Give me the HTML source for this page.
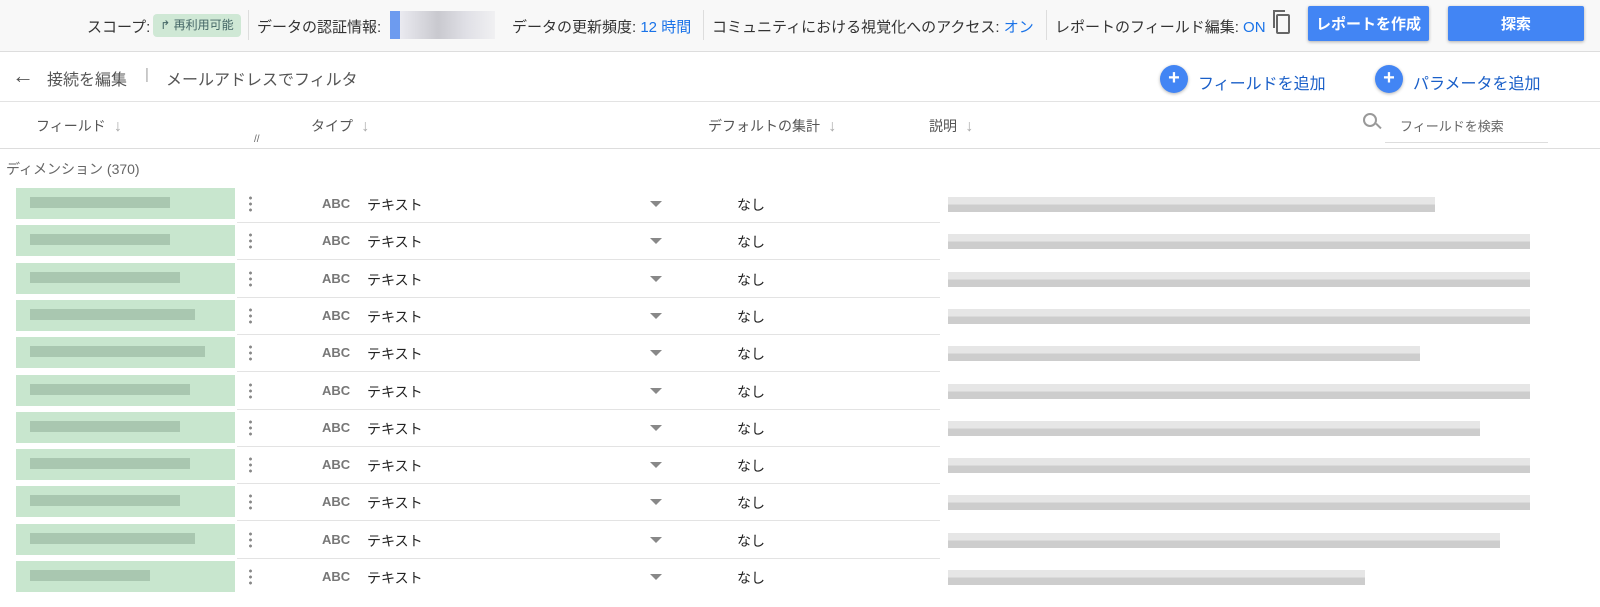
<!DOCTYPE html>
<html><head><meta charset="utf-8"><style>
*{margin:0;padding:0;box-sizing:border-box}
body{width:1600px;height:607px;overflow:hidden;background:#fff;font-family:"Liberation Sans","Noto Sans CJK JP",sans-serif;color:#333;position:relative}
.a{position:absolute;white-space:nowrap}
.top{position:absolute;left:0;top:0;width:1600px;height:52px;background:#f8f8f8;border-bottom:1px solid #ddd}
.sep{position:absolute;top:10px;width:1px;height:30px;background:#ddd}
.btn{position:absolute;top:6px;height:35px;background:#4285f4;color:#fff;font-size:15px;font-weight:bold;display:flex;align-items:center;justify-content:center;border-radius:2px;box-shadow:0 1px 3px rgba(0,0,0,.3)}
.blue{color:#1a73e8}
.plus{position:absolute;width:28px;height:28px;border-radius:50%;background:#4285f4;color:#fff;font-size:20px;font-weight:bold;text-align:center;line-height:27px;box-shadow:0 1px 3px rgba(0,0,0,.3)}
.hdr{font-size:14px;color:#555;top:116px}
.arr{color:#aaa;font-size:16px}
.row{position:absolute;left:0;width:1600px;height:37px}
.g{position:absolute;left:16px;top:2px;width:219px;height:31px;background:#c8e6ce}
.gi{position:absolute;left:30px;top:11px;height:11px;background:#a9c7b0}
.dots{position:absolute;left:249px;top:9px;width:3px;height:18px;background:radial-gradient(circle,#888 1.3px,transparent 1.6px) 0 0/3px 6px}
.abc{position:absolute;left:322px;top:10px;font-size:13px;color:#777;font-weight:bold;letter-spacing:0px}
.t{position:absolute;left:367px;top:9px;font-size:14px;color:#222}
.tri{position:absolute;left:650px;top:15px;border-left:6px solid transparent;border-right:6px solid transparent;border-top:6px solid #888}
.n{position:absolute;left:737px;top:9px;font-size:14px;color:#222}
.d{position:absolute;left:948px;top:11px;height:15px;background:linear-gradient(#e6e6e6 50%,#cdcdcd 50%)}
.line{position:absolute;left:237px;bottom:0;width:703px;height:1px;background:#e3e3e3}
</style></head><body>
<div class="top">
<div class="a" style="left:87px;top:16px;font-size:15px">スコープ:</div>
<div class="a" style="left:153px;top:14px;width:88px;height:23px;background:#cfe8d5;border-radius:4px;font-size:12px;color:#466;line-height:23px;text-align:center">↱ 再利用可能</div>
<div class="sep" style="left:248px"></div>
<div class="a" style="left:257px;top:16px;font-size:15px">データの認証情報:</div>
<div class="a" style="left:390px;top:11px;width:10px;height:28px;background:#6d9bef"></div>
<div class="a" style="left:400px;top:11px;width:95px;height:28px;background:linear-gradient(90deg,#eaeaf0,#c9c9cf 40%,#e0e0e6 70%,#f0f0f2)"></div>
<div class="a" style="left:512px;top:16px;font-size:15px">データの更新頻度: <span class="blue">12 時間</span></div>
<div class="sep" style="left:703px"></div>
<div class="a" style="left:712px;top:16px;font-size:15px">コミュニティにおける視覚化へのアクセス: <span class="blue">オン</span></div>
<div class="sep" style="left:1046px"></div>
<div class="a" style="left:1055px;top:16px;font-size:15px">レポートのフィールド編集: <span class="blue">ON</span></div>
<div class="a" style="left:1276px;top:14px;width:14px;height:20px;border:2px solid #666;border-radius:2px;background:#f8f8f8"></div>
<div class="a" style="left:1273px;top:10px;width:12px;height:18px;border-left:2px solid #666;border-top:2px solid #666"></div>
<div class="btn" style="left:1308px;width:121px">レポートを作成</div>
<div class="btn" style="left:1448px;width:136px">探索</div>
</div>
<div class="a" style="left:12px;top:63px;font-size:22px;color:#555">←</div>
<div class="a" style="left:47px;top:66px;font-size:16px;color:#555">接続を編集</div>
<div class="a" style="left:145px;top:66px;font-size:15px;color:#aaa">|</div>
<div class="a" style="left:166px;top:66px;font-size:16px;color:#555">メールアドレスでフィルタ</div>
<div class="plus" style="left:1160px;top:65px">+</div>
<div class="a blue" style="left:1198px;top:70px;font-size:16px;color:#1a5fc8">フィールドを追加</div>
<div class="plus" style="left:1375px;top:65px">+</div>
<div class="a" style="left:1413px;top:70px;font-size:16px;color:#1a5fc8">パラメータを追加</div>
<div class="a" style="left:0;top:101px;width:1600px;height:1px;background:#e3e3e3"></div>
<div class="a hdr" style="left:36px">フィールド <span class="arr">&nbsp;↓</span></div>
<div class="a" style="left:254px;top:134px;font-size:10px;color:#666">//</div>
<div class="a hdr" style="left:311px">タイプ <span class="arr">&nbsp;↓</span></div>
<div class="a hdr" style="left:708px">デフォルトの集計 <span class="arr">&nbsp;↓</span></div>
<div class="a hdr" style="left:929px">説明 <span class="arr">&nbsp;↓</span></div>
<div class="a" style="left:1363px;top:113px;width:14px;height:14px;border:2px solid #999;border-radius:50%"></div>
<div class="a" style="left:1375px;top:125px;width:7px;height:2px;background:#999;transform:rotate(45deg)"></div>
<div class="a" style="left:1400px;top:116px;font-size:13px;color:#666">フィールドを検索</div>
<div class="a" style="left:1385px;top:142px;width:163px;height:1px;background:#ddd"></div>
<div class="a" style="left:0;top:148px;width:1600px;height:1px;background:#ddd"></div>
<div class="a" style="left:6px;top:159px;font-size:14px;color:#666">ディメンション (370)</div>
<div id="rows"></div>
<script>
var ends=[1435,1530,1530,1530,1420,1530,1480,1530,1530,1500,1365];
var gw=[140,140,150,165,175,160,150,160,150,165,120];
var h='';
for(var i=0;i<11;i++){var y=186+i*37.3;
h+='<div class="row" style="top:'+y+'px"><div class="g"></div><div class="gi" style="width:'+gw[i]+'px"></div><div class="dots"></div><div class="abc">ABC</div><div class="t">テキスト</div><div class="tri"></div><div class="n">なし</div><div class="d" style="width:'+(ends[i]-948)+'px"></div>'+(i<10?'<div class="line"></div>':'')+'</div>';}
document.getElementById('rows').innerHTML=h;
</script>
</body></html>
